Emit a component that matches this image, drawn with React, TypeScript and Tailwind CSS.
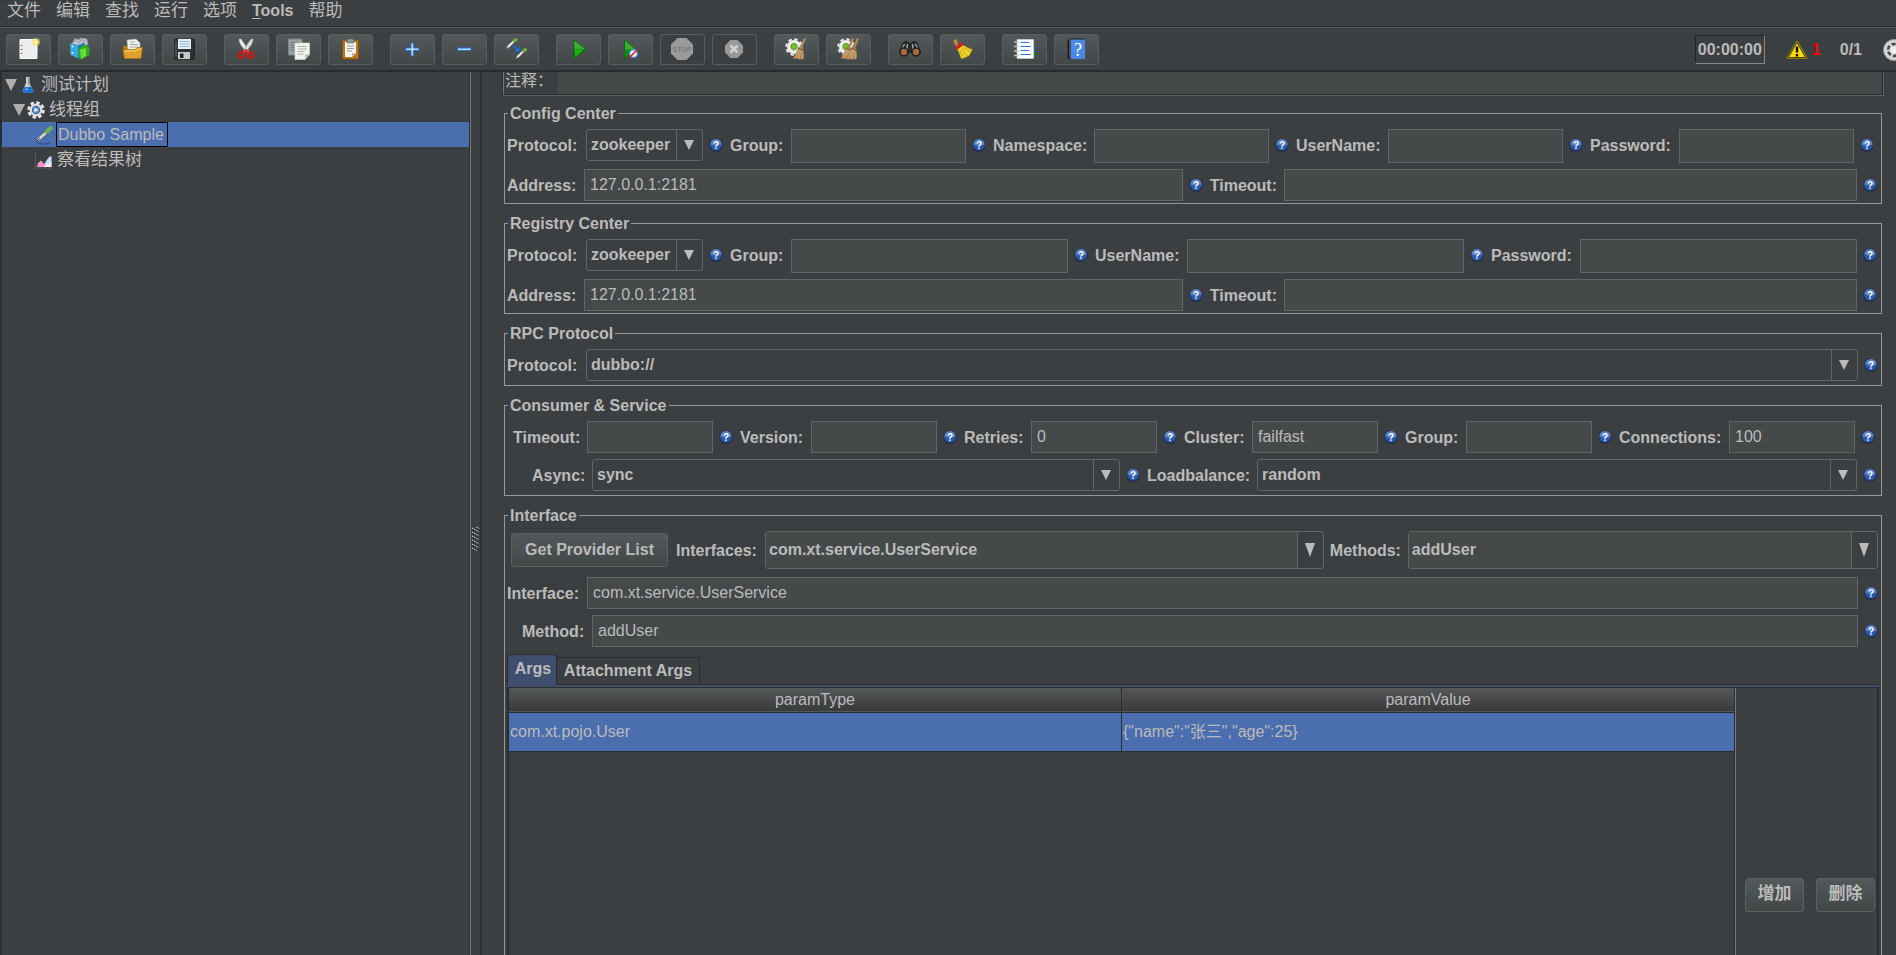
import React from 'react';

const menus = ['文件', '编辑', '查找', '运行', '选项', 'Tools', '帮助'];

function Broom({ x = 0 }: { x?: number }) {
    return (
        <g transform={`translate(${x} 0)`}>
            <path d="M20 1 22 2 17.500 12 15.500 11Z" fill="#b08a5a" />
            <path d="M14.500 9.500 19 11.500C20 15 20.500 19 19.500 22L16 22.500 13 21.500 8.500 21.500C11 18 13.500 14 14.500 9.500Z" fill="#a97d4e" />
            <path d="M15.500 12 11 21M17 12.500 15 22M18 13 18.500 22M16 12 13 21.500" stroke="#e0bd90" strokeWidth=".7" />
            <path d="m14 11.500 5 2" stroke="#6f4c28" strokeWidth=".8" />
        </g>
    );
}

function Cog() {
    return (
        <g>
            <circle cx="10" cy="10" r="7.800" fill="none" stroke="#e4e4e4" strokeWidth="2" strokeDasharray="3.500 2.630" />
            <circle cx="10" cy="10" r="7" fill="#ededed" />
            <circle cx="10" cy="10" r="4.300" fill="#d2d2d2" />
            <circle cx="10" cy="9.500" r="3" fill="#6dc41f" stroke="#4a8d12" strokeWidth=".8" />
        </g>
    );
}

function Dropper({ x, y }: { x: number; y: number }) {
    return (
        <g transform={`translate(${x} ${y})`} strokeLinecap="round">
            <path d="M1 10 2.500 8" stroke="#8f9a8f" strokeWidth="1.500" />
            <path d="M2.500 8.500 7.500 3.500" stroke="#e9efe9" strokeWidth="2" />
            <path d="m8 3 2-1.500" stroke="#6fae45" strokeWidth="3" />
        </g>
    );
}

const icons: Record<string, React.ReactNode> = {
    New: (
        <>
            <path d="M4 2.500h17v19H4z" fill="#ececec" stroke="#fafafa" />
            <path d="M5.500 8v1M5.500 12v1M5.500 16v1" stroke="#555" strokeWidth="1.500" />
            <circle cx="20" cy="5" r="4" fill="#f5ec74" opacity=".5" />
            <circle cx="20" cy="5" r="2.300" fill="#fffbc0" stroke="#ecdb35" />
        </>
    ),
    Templates: (
        <>
            <path d="m4 7 3-5.500 4 1L13 1l6 1 1 5.500-8 3Z" fill="#b9c3c7" stroke="#8b979b" strokeWidth=".7" />
            <path d="m6.500 5 2.500-3M10 6l4-4M14 6l3-3" stroke="#6f7b80" strokeWidth=".8" />
            <path d="m2 6 8 2v13.500L2.500 18Z" fill="#39a7dd" />
            <path d="m10 8 7-2v13l-7 2.500Z" fill="#1d80b8" />
            <circle cx="4.500" cy="9.500" r="1" fill="#d8f2ff" />
            <circle cx="4.500" cy="16" r="1" fill="#d8f2ff" />
            <path d="m11 11 5-3 5.500 2v8L13 22.500 10.500 20Z" fill="#2fa81c" />
            <path d="m12 12.500 6-1.500v8l-5 3Z" fill="#63dc3d" />
        </>
    ),
    Open: (
        <>
            <path d="M3 9h4l1 2h13v10H4Z" fill="#b67b12" />
            <path d="m7 3 9-1 4 4v9H8Z" fill="#f2f2f2" stroke="#a8a8a8" strokeWidth=".6" />
            <path d="M10 5h5M10 7.500h8M10 10h8" stroke="#999" strokeWidth=".9" />
            <path d="M3 12.500h12l2-2h5.500L21 21.500H4.500Z" fill="#e0a02a" stroke="#a56d0d" strokeWidth=".7" />
            <path d="M4.500 14h11.500l2-2h3" stroke="#ffd77c" fill="none" />
        </>
    ),
    Save: (
        <>
            <rect x="2.800" y="2" width="19.500" height="20" rx="1" fill="#2e3234" stroke="#16191a" strokeWidth=".8" />
            <path d="M6 2h13v10H6z" fill="#e8f0f7" />
            <path d="M7.500 4.500h10M7.500 7h10M7.500 9.500h10" stroke="#8fb3d4" />
            <path d="M6 15h12v7H6z" fill="#c6c8c9" />
            <path d="M8 16.500h3.500v4.500H8z" fill="#222" />
            <path d="M4 4v16" stroke="#676c6f" />
        </>
    ),
    Cut: (
        <>
            <path d="M5 2C5 7 9 11 13 15l1.500-2L7 2Z" fill="#ececec" stroke="#aaa" strokeWidth=".5" />
            <path d="M19 2C19 7 15 11 11 15l-1.500-2L17 2Z" fill="#dcdcdc" stroke="#999" strokeWidth=".5" />
            <ellipse cx="7.500" cy="18" rx="3" ry="2.500" transform="rotate(-40 7.500 18)" fill="none" stroke="#d81616" strokeWidth="2" />
            <ellipse cx="16.500" cy="18" rx="3" ry="2.500" transform="rotate(40 16.500 18)" fill="none" stroke="#d81616" strokeWidth="2" />
            <path d="m12 12.500-2.500 3.500M12 12.500l2.500 3.500" stroke="#e42626" strokeWidth="2" />
        </>
    ),
    Copy: (
        <>
            <path d="M2.500 2H16v16H2.500z" fill="#9aa0a2" stroke="#7f8587" />
            <path d="M4.500 5.500h8M4.500 8h4M4.500 10.500h4M4.500 13h4" stroke="#6f7577" />
            <path d="M9 6h14.500v11.500L19 22.500H9z" fill="#f3f3f0" stroke="#d6d6d0" strokeWidth=".7" />
            <path d="M11.500 9.500h9M11.500 12h9M11.500 14.500h7M11.500 17h6" stroke="#aaa" />
            <path d="M23.500 17.500H19v5Z" fill="#bdbdb8" />
        </>
    ),
    Paste: (
        <>
            <rect x="4.500" y="3" width="16" height="19" rx="1" fill="#b97620" stroke="#875010" />
            <path d="M7 5h11v11l-4 4H7z" fill="#f4f4f2" />
            <path d="M9 3.500C9 1 16 1 16 3.500V6H9Z" fill="#8f9699" stroke="#555b5d" strokeWidth=".6" />
            <path d="M9 9h7M9 11.500h7M9 14h5" stroke="#9b9b9b" />
            <path d="M18 16h-4v4Z" fill="#b8b8b4" />
        </>
    ),
    Expand: <path d="M11 6h2.500v5H19v2.500h-5.500V19H11v-5.500H5.500V11H11Z" fill="#b4dcff" stroke="#2f6fc9" />,
    Collapse: <path d="M5.500 11H19v2.500H5.500Z" fill="#b4dcff" stroke="#2f6fc9" />,
    Toggle: (
        <>
            <Dropper x={2} y={1} />
            <Dropper x={11.500} y={11} />
            <path d="m9.500 8.500 4 4" stroke="#1c6fe8" strokeWidth="1.600" />
            <path d="M15.500 14.500v-5l-5 5Z" fill="#1c6fe8" />
        </>
    ),
    Start: (
        <>
            <path d="M8 3v18.500L20 12Z" fill="#0b8f0b" stroke="#056005" strokeWidth=".6" />
            <path d="M8.500 4v8.500L19 12Z" fill="#3fae34" />
            <path d="M9 13v7l8-7Z" fill="#11b811" />
        </>
    ),
    'Start no pauses': (
        <>
            <path d="M6.500 3v18.500L17.500 12Z" fill="#0b8f0b" stroke="#056005" strokeWidth=".6" />
            <path d="M7 4v8.500L17 12Z" fill="#3fae34" />
            <circle cx="15.500" cy="16.500" r="4" fill="#eef5ff" stroke="#3c86d9" strokeWidth="1.300" />
            <path d="m11.500 20.500 8-8" stroke="#e02020" strokeWidth="1.600" />
        </>
    ),
    Stop: (
        <>
            <path d="M7.500 1h9L23 7.500v9L16.500 23h-9L1 16.500v-9Z" fill="#9a9a9a" />
            <text x="12" y="15" fontSize="7" fontWeight="700" textAnchor="middle" fill="#7c7c7c" fontFamily="Liberation Sans, sans-serif">STOP</text>
        </>
    ),
    Shutdown: (
        <>
            <path d="M8.500 3h7l5.500 5.500v7L15.500 21h-7L3 15.500v-7Z" fill="#999" />
            <path d="m8.500 8.500 7 7M15.500 8.500l-7 7" stroke="#d2d2d2" strokeWidth="2.600" />
        </>
    ),
    Clear: (
        <>
            <Cog />
            <Broom />
        </>
    ),
    'Clear All': (
        <>
            <Cog />
            <Broom x={-4} />
            <Broom x={1} />
        </>
    ),
    Search: (
        <>
            <path d="m5 6 3-1.500L11 6l1 3 1-3 3-1.500L19 6l3.500 9h-21Z" fill="#2b2b2b" stroke="#111" strokeWidth=".8" />
            <path d="m4 12 2.500-5M20 12l-2.500-5M9 12l.5-5M15 12l-.5-5" stroke="#a5a5a5" strokeWidth="1.500" />
            <circle cx="6" cy="15" r="4" fill="#a8683a" stroke="#1b1b1b" strokeWidth="1.500" />
            <circle cx="18" cy="15" r="4" fill="#a8683a" stroke="#1b1b1b" strokeWidth="1.500" />
            <path d="M3.500 14a3 3 0 0 1 5 0M15.500 14a3 3 0 0 1 5 0" stroke="#777" fill="none" />
        </>
    ),
    'Reset Search': (
        <>
            <path d="M3.500 3.500 5 2l2 .5L8.500 8 6.500 9.500 3.500 6Z" fill="#b98a45" stroke="#7b5720" strokeWidth=".7" />
            <path d="m7 12.500 6-4.500C16 10 19 11 22.500 12.500L19 19l-7.500 3C9.500 19 9.500 15 7 12.500Z" fill="#f0d528" stroke="#9a8210" strokeWidth=".7" />
            <path d="m9.500 12.500 4 8M11.500 11.500l6 7.500M13 10.500l8 4" stroke="#b59a12" strokeWidth=".8" />
            <path d="m6 11.500 6.500-5" stroke="#d81e1e" strokeWidth="3" />
        </>
    ),
    Functions: (
        <>
            <path d="M20 9h3v5h-3z" fill="#1b6fd6" />
            <path d="M20 15h3v5h-3z" fill="#1c9b1c" />
            <path d="M5 2.500h16.500v19H5z" fill="#fff" stroke="#d8d8d8" strokeWidth=".6" />
            <path d="M2 5h4.500M2 9.500h4.500M2 14h4.500M2 18.500h4.500" stroke="#c0c0c0" strokeWidth="1.600" />
            <path d="M8.500 5.500h9M8.500 9.500h10.500M8.500 13.500h9M8.500 17.500h10.500" stroke="#2d7bea" />
        </>
    ),
    Help: (
        <>
            <path d="M3.500 3 6 1.500h15V22H4.500l-1-1Z" fill="#1c1f21" />
            <path d="M7 2.500h14V22H7z" fill="#4a8ae6" />
            <path d="M6 2v19" stroke="#bfc4c8" strokeWidth=".6" />
            <text x="14" y="18.500" fontSize="18" textAnchor="middle" fill="#fff" fontFamily="Liberation Serif, serif">?</text>
        </>
    ),
};

const toolbar = [
    ['New', 'Templates', 'Open', 'Save'],
    ['Cut', 'Copy', 'Paste'],
    ['Expand', 'Collapse', 'Toggle'],
    ['Start', 'Start no pauses', 'Stop', 'Shutdown'],
    ['Clear', 'Clear All'],
    ['Search', 'Reset Search'],
    ['Functions', 'Help'],
];

function ToolButton({ name }: { name: string }) {
    const disabled = name === 'Stop' || name === 'Shutdown';
    return (
        <button
            type="button"
            aria-label={name}
            disabled={disabled}
            className={`flex h-[31px] w-[45px] items-center justify-center rounded-[3px] border border-[#5a5d5e] pr-px pb-px ${disabled ? '' : 'bg-gradient-to-b from-[#53585a] to-[#424748]'}`}
        >
            <svg viewBox="0 0 24 24" className="size-6 shrink-0">{icons[name]}</svg>
        </button>
    );
}

function Toolbar() {
    return (
        <div className="flex items-center border-b-2 border-[#282a2b] pt-1.5 pb-[5px] pl-1.5">
            <div className="flex gap-[17px]">
                {toolbar.map((group) => (
                    <div key={group[0]} className="flex gap-[7px]">
                        {group.map((name) => <ToolButton key={name} name={name} />)}
                    </div>
                ))}
            </div>
            <div className="ml-auto flex h-[31px] items-center overflow-hidden font-bold">
                <div className="flex h-[29px] w-[70px] items-center justify-center border border-t-[#222425] border-r-[#85888a] border-b-[#85888a] border-l-[#222425]">00:00:00</div>
                <svg viewBox="0 0 22 20" className="ml-[21px] h-5 w-[22px]">
                    <path d="M11 1.500 20.500 18h-19Z" fill="#f7d716" stroke="#8a7710" strokeWidth="2" strokeLinejoin="round" />
                    <path d="M11 2.500 19.500 17.500h-17Z" fill="#f9da14" stroke="#3b3405" strokeWidth=".8" />
                    <path d="M11 6.500v6M11 14v2.500" stroke="#111" strokeWidth="2.400" />
                </svg>
                <span className="ml-1 text-[#ff0000]">1</span>
                <span className="ml-[19px]">0/1</span>
                <div className="ml-[21px] w-[13px] overflow-hidden">
                    <svg viewBox="0 0 22 22" className="size-[22px] max-w-none">
                        <circle cx="11" cy="11" r="10.500" fill="#d5d5d5" stroke="#9a9a9a" />
                        <circle cx="11" cy="11" r="6" fill="none" stroke="#444" strokeWidth="2.500" strokeDasharray="4 2.280" />
                        <circle cx="11" cy="11" r="3.500" fill="#efefef" />
                    </svg>
                </div>
            </div>
        </div>
    );
}

function Caret() {
    return (
        <svg viewBox="0 0 12 12" className="size-3 shrink-0">
            <path d="M0 0h12L6 12Z" fill="#adadad" />
        </svg>
    );
}

function TestTree() {
    return (
        <aside className="w-[471px] shrink-0 border-r border-[#77797a]">
            <ul className="h-full border-r border-l-2 border-[#2b2d2e] text-[17px] leading-[23px]">
                <li className="flex h-[25px] items-center pl-[3px]">
                    <Caret />
                    <svg viewBox="0 0 14 18" className="ml-1 h-[18px] w-3.5">
                        <path d="M5 1h3.500v6l4 8.500c0 1.500-11 1.500-11 0L5 7Z" fill="#dfe8ee" opacity=".85" />
                        <path d="M3.500 11h7l2 4.500c0 2-11 2-11 0Z" fill="#1d73cf" />
                        <path d="M4.500 14c0-1.500 2-1.500 2 0" stroke="#9fd0ff" fill="none" />
                        <path d="M7.500 2v6l2 3" stroke="#8b979f" fill="none" />
                    </svg>
                    <span className="ml-1.5 pb-px">测试计划</span>
                </li>
                <li className="flex h-[25px] items-center pl-[11px]">
                    <Caret />
                    <svg viewBox="0 0 18 18" className="ml-0.5 size-[18px]">
                        <circle cx="9" cy="9" r="7.300" fill="none" stroke="#e4e4e4" strokeWidth="3" strokeDasharray="3.400 2.330" />
                        <circle cx="9" cy="9" r="5.300" fill="#fff" stroke="#d9dde2" strokeWidth="2.400" />
                        <circle cx="9" cy="9" r="3.700" fill="#6e93cc" stroke="#33569a" />
                        <path d="m7.500 7 3.500 2-3.500 2Z" fill="#fff" />
                    </svg>
                    <span className="ml-1 pb-px">线程组</span>
                </li>
                <li className="flex h-[25px] items-center bg-[#4b6eaf] pl-8">
                    <svg viewBox="0 0 20 20" className="size-5">
                        <path d="M4 18.500c4 1 10 .5 12-.5" stroke="#2f4880" strokeWidth="1" fill="none" />
                        <path d="m2 17 1.500-4L11 6.500 13 9 5.500 15.500Z" fill="#d5d8d8" stroke="#555b5b" strokeWidth=".8" />
                        <path d="m2 17 4-4" stroke="#3c4141" />
                        <path d="m11 5 3.500 4M13 6.500 17 3" stroke="#4f8f3a" strokeWidth="2" />
                        <path d="m13 6.500 4-3.500" stroke="#6fb052" strokeWidth="4" strokeLinecap="round" />
                    </svg>
                    <span className="ml-0.5 h-[25px] border border-black pr-[3px] pl-px text-base">Dubbo Sample</span>
                </li>
                <li className="flex h-[25px] items-center pl-8">
                    <svg viewBox="0 0 20 20" className="size-5">
                        <path d="M1.500 3v15h16" stroke="#6d7072" fill="none" strokeDasharray="1.500 1" />
                        <path d="m10 14 5-7 2.500-1v11H10Z" fill="#c4dcf5" />
                        <path d="m3 17 1-4 3-2.500 3 3.500 3-1.500V17Z" fill="#f394cf" />
                        <path d="m10 17 3-4 2 1 2.500-3v6Z" fill="#f7e4f2" />
                    </svg>
                    <span className="ml-[3px] pb-px">察看结果树</span>
                </li>
            </ul>
        </aside>
    );
}

function Splitter() {
    return (
        <div className="flex w-[9px] shrink-0 items-center pt-[50px] pl-px">
            <svg viewBox="0 0 7 24" className="h-6 w-[7px]">
                <path d="M0 1l7 4M0 5l7 4M0 9l7 4M0 13l7 4M0 17l7 4M0 21l5 3M4 0l3 1.500" stroke="#1d1f20" strokeWidth="1" transform="translate(0 1)" />
                <path d="M0 1l7 4M0 5l7 4M0 9l7 4M0 13l7 4M0 17l7 4M0 21l5 3M4 0l3 1.500" stroke="#d0d0d0" strokeWidth="1.200" strokeDasharray="1.500 1" />
            </svg>
        </div>
    );
}

function HelpIcon() {
    return (
        <button type="button" aria-label="Help" className="flex h-8 w-3.5 shrink-0 items-center">
            <svg viewBox="0 0 14 14" className="size-3.5">
                <circle cx="7" cy="7.300" r="6.500" fill="#1c2740" />
                <circle cx="7" cy="6.800" r="5.900" fill="#2a57a5" />
                <path d="M1.500 6.500a5.500 5.500 0 0 1 11 0c-3 1.500-8 1.500-11 0Z" fill="#5a82c4" />
                <text x="7" y="10.500" fontSize="10" fontWeight="700" textAnchor="middle" fill="#fff" fontFamily="Liberation Sans, sans-serif">?</text>
            </svg>
        </button>
    );
}

function Label({ id, text, width }: { id: string; text: string; width: string }) {
    return <label htmlFor={id} className={`h-8 shrink-0 pl-px leading-[34px] font-bold whitespace-nowrap ${width}`}>{text}</label>;
}

type FieldProps = { id: string; label: string; width: string; value?: string; grow?: string; height?: string };

function TextField({ id, label, width, value = '', grow = 'flex-1', height = 'h-8' }: FieldProps) {
    return (
        <>
            <Label id={id} text={label} width={width} />
            <input id={id} type="text" defaultValue={value} className={`min-w-0 border border-[#646464] bg-[#45494a] px-[5px] ${height} ${grow}`} />
            <HelpIcon />
        </>
    );
}

function SelectField({ id, label, width, value = '', grow = 'flex-1' }: FieldProps) {
    return (
        <>
            <Label id={id} text={label} width={width} />
            <div className={`relative h-8 min-w-0 ${grow}`}>
                <select id={id} defaultValue={value} className="h-8 w-full appearance-none rounded-[3px] border border-[#646464] bg-[#3c3f41] pr-[26px] pl-1 font-bold">
                    <option>{value}</option>
                </select>
                <span className="pointer-events-none absolute inset-y-0 right-0 flex w-[27px] items-center justify-center border-l border-[#646464] pr-0.5">
                    <svg viewBox="0 0 10 10" className="mb-px size-2.5"><path d="M0 0h10L5 10Z" fill="#bbb" /></svg>
                </span>
            </div>
            <HelpIcon />
        </>
    );
}

function ComboField({ id, label, width, value, grow }: FieldProps) {
    return (
        <>
            <Label id={id} text={label} width={width} />
            <div className={`ml-1.5 flex h-[38px] min-w-0 overflow-hidden rounded-[3px] border border-[#646464] ${grow}`}>
                <input id={id} type="text" defaultValue={value} className="min-w-0 flex-1 bg-[#45494a] pl-[3px] font-bold" />
                <button type="button" aria-label={`Open ${label}`} className="flex w-[26px] items-center justify-center border-l border-[#646464] pr-px">
                    <svg viewBox="0 0 10 14" className="h-3.5 w-2.5"><path d="M0 0h10L5 14Z" fill="#bbb" /></svg>
                </button>
            </div>
        </>
    );
}

function Group({ title, className, children }: { title: string; className: string; children: React.ReactNode }) {
    return (
        <fieldset className={`mx-0.5 min-w-0 border border-[#969899] ${className}`}>
            <legend className="ml-[3px] h-5 px-0.5 leading-[22px] font-bold">{title}</legend>
            {children}
        </fieldset>
    );
}

function Row({ className, children }: { className: string; children: React.ReactNode }) {
    return <div className={`flex items-start gap-1.5 ${className}`}>{children}</div>;
}

function PushButton({ className, children }: { className: string; children: React.ReactNode }) {
    return (
        <button type="button" className={`h-[34px] shrink-0 rounded-[3px] border border-[#5e6061] bg-gradient-to-b from-[#53585a] to-[#424748] font-bold ${className}`}>
            {children}
        </button>
    );
}

function ArgsPanel() {
    return (
        <div className="mt-[7px] mr-0.5 ml-0.5 flex min-h-0 flex-1 flex-col">
            <div role="tablist" className="flex items-end">
                <button type="button" role="tab" aria-selected="true" className="relative -mb-px h-[31px] w-[50px] rounded-t-[3px] border border-b-0 border-[#2b2d2e] bg-[#414f6e] pb-0.5 pl-0.5 font-bold">Args</button>
                <button type="button" role="tab" aria-selected="false" className="h-[27px] w-[143px] border border-b-0 border-l-0 border-[#2b2d2e] font-bold">Attachment Args</button>
            </div>
            <div className="h-1 shrink-0 border-y border-[#2b2d2e] bg-[#414f6e]" />
            <div className="flex min-h-0 flex-1 border-r-2 border-l-2 border-[#2b2d2e]">
                <div className="flex-1 border-r border-[#77797a]">
                    <div className="h-full border-r border-[#2b2d2e]">
                        <table className="w-full table-fixed border-collapse">
                            <thead>
                                <tr className="h-6 border-b border-[#2b2d2e] bg-gradient-to-b from-[#55585a] to-[#393a3a] leading-[23px]">
                                    <th className="border-r border-[#2b2d2e] p-0 font-normal">paramType</th>
                                    <th className="p-0 font-normal">paramValue</th>
                                </tr>
                            </thead>
                            <tbody>
                                <tr className="h-[39px] border-b border-[#2b2d2e] bg-[#4b6eaf]">
                                    <td className="border-r border-[#2b2d2e] p-0 pl-px">com.xt.pojo.User</td>
                                    <td className="p-0 pl-px">{'{"name":"张三","age":25}'}</td>
                                </tr>
                            </tbody>
                        </table>
                    </div>
                </div>
                <div className="flex w-[141px] items-end gap-3 pb-[43px] pl-[9px] text-[17px]">
                    <PushButton className="w-[59px] pb-0.5">增加</PushButton>
                    <PushButton className="w-[59px] pb-0.5">删除</PushButton>
                </div>
            </div>
        </div>
    );
}

function SamplerForm() {
    return (
        <main className="flex min-w-0 flex-1 flex-col border-l-2 border-[#2b2d2e] pr-3 pl-5">
            <div className="mb-[7px] h-6 shrink-0 border-r border-b border-l border-r-[#5d6061] border-b-[#5d6061] border-l-[#2b2d2e]">
                <div className="flex h-[23px] border-r border-b border-l border-r-[#2b2d2e] border-b-[#2b2d2e] border-l-[#77797a]">
                    <label htmlFor="comments" className="w-[54px] pl-px leading-[18px] whitespace-nowrap">注释：</label>
                    <input id="comments" type="text" className="min-w-0 flex-1 bg-[#45494a]" />
                </div>
            </div>
            <div className="flex min-h-0 flex-1 flex-col gap-[9px]">
                <Group title="Config Center" className="pb-0.5">
                    <Row className="mt-1.5 pr-[7px] pl-px">
                        <SelectField id="cc-protocol" label="Protocol:" width="w-[74px]" value="zookeeper" grow="w-[117px] shrink-0" />
                        <TextField id="cc-group" label="Group:" width="w-14" height="h-[34px]" />
                        <TextField id="cc-namespace" label="Namespace:" width="w-24" height="h-[34px]" />
                        <TextField id="cc-username" label="UserName:" width="w-[87px]" height="h-[34px]" />
                        <TextField id="cc-password" label="Password:" width="w-[84px]" height="h-[34px]" />
                    </Row>
                    <Row className="mt-1.5 pr-1 pl-px">
                        <TextField id="cc-address" label="Address:" width="w-[72px]" value="127.0.0.1:2181" grow="flex-[599]" />
                        <TextField id="cc-timeout" label="Timeout:" width="w-[69px]" grow="flex-[573]" />
                    </Row>
                </Group>
                <Group title="Registry Center" className="pb-0.5">
                    <Row className="mt-1.5 pr-1 pl-px">
                        <SelectField id="rc-protocol" label="Protocol:" width="w-[74px]" value="zookeeper" grow="w-[117px] shrink-0" />
                        <TextField id="rc-group" label="Group:" width="w-14" height="h-[34px]" />
                        <TextField id="rc-username" label="UserName:" width="w-[87px]" height="h-[34px]" />
                        <TextField id="rc-password" label="Password:" width="w-[84px]" height="h-[34px]" />
                    </Row>
                    <Row className="mt-1.5 pr-1 pl-px">
                        <TextField id="rc-address" label="Address:" width="w-[72px]" value="127.0.0.1:2181" grow="flex-[599]" />
                        <TextField id="rc-timeout" label="Timeout:" width="w-[69px]" grow="flex-[573]" />
                    </Row>
                </Group>
                <Group title="RPC Protocol" className="pb-1">
                    <Row className="mt-1.5 pr-[3px] pl-px">
                        <SelectField id="rpc-protocol" label="Protocol:" width="w-[74px]" value="dubbo://" />
                    </Row>
                </Group>
                <Group title="Consumer &amp; Service" className="pb-1">
                    <Row className="mt-1.5 pr-1.5 pl-[7px]">
                        <TextField id="cs-timeout" label="Timeout:" width="w-[69px]" />
                        <TextField id="cs-version" label="Version:" width="w-[66px]" />
                        <TextField id="cs-retries" label="Retries:" width="w-[62px]" value="0" />
                        <TextField id="cs-cluster" label="Cluster:" width="w-[63px]" value="failfast" />
                        <TextField id="cs-group" label="Group:" width="w-14" />
                        <TextField id="cs-connections" label="Connections:" width="w-[105px]" value="100" />
                    </Row>
                    <Row className="mt-1.5 pr-1 pl-[26px]">
                        <SelectField id="cs-async" label="Async:" width="w-[55px]" value="sync" grow="flex-[528]" />
                        <SelectField id="cs-loadbalance" label="Loadbalance:" width="w-[105px]" value="random" grow="flex-[600]" />
                    </Row>
                </Group>
                <Group title="Interface" className="flex min-h-0 flex-1 flex-col border-b-0">
                    <div className="mt-1.5 flex items-center pr-[3px] pl-1.5">
                        <PushButton className="mr-[7px] w-[157px]">Get Provider List</PushButton>
                        <ComboField id="if-interfaces" label="Interfaces:" width="w-[84px]" value="com.xt.service.UserService" grow="mr-[5px] flex-[559]" />
                        <ComboField id="if-methods" label="Methods:" width="w-[73px]" value="addUser" grow="flex-[470]" />
                    </div>
                    <Row className="mt-2 pr-[3px] pl-px">
                        <TextField id="if-interface" label="Interface:" width="w-[75px]" value="com.xt.service.UserService" />
                    </Row>
                    <Row className="mt-1.5 pr-[3px] pl-4">
                        <TextField id="if-method" label="Method:" width="w-[65px]" value="addUser" />
                    </Row>
                    <ArgsPanel />
                </Group>
            </div>
        </main>
    );
}

export default function App() {
    return (
        <div className="flex h-screen flex-col overflow-hidden bg-[#3c3f41] font-['Liberation_Sans','Noto_Sans_CJK_SC',sans-serif] text-base text-[#bbbbbb]">
            <nav className="flex h-[27px] shrink-0 items-start gap-[15px] border-b border-[#2b2d2e] pl-[7px]">
                {menus.map((menu) =>
                    menu === 'Tools' ? (
                        <button key={menu} type="button" className="leading-[22px] font-bold"><span className="underline underline-offset-2">T</span>ools</button>
                    ) : (
                        <button key={menu} type="button" className="text-[17px] leading-[22px]">{menu}</button>
                    ),
                )}
            </nav>
            <div className="shrink-0 border-t border-[#565859]">
                <Toolbar />
            </div>
            <div className="flex min-h-0 flex-1">
                <TestTree />
                <Splitter />
                <SamplerForm />
            </div>
        </div>
    );
}
